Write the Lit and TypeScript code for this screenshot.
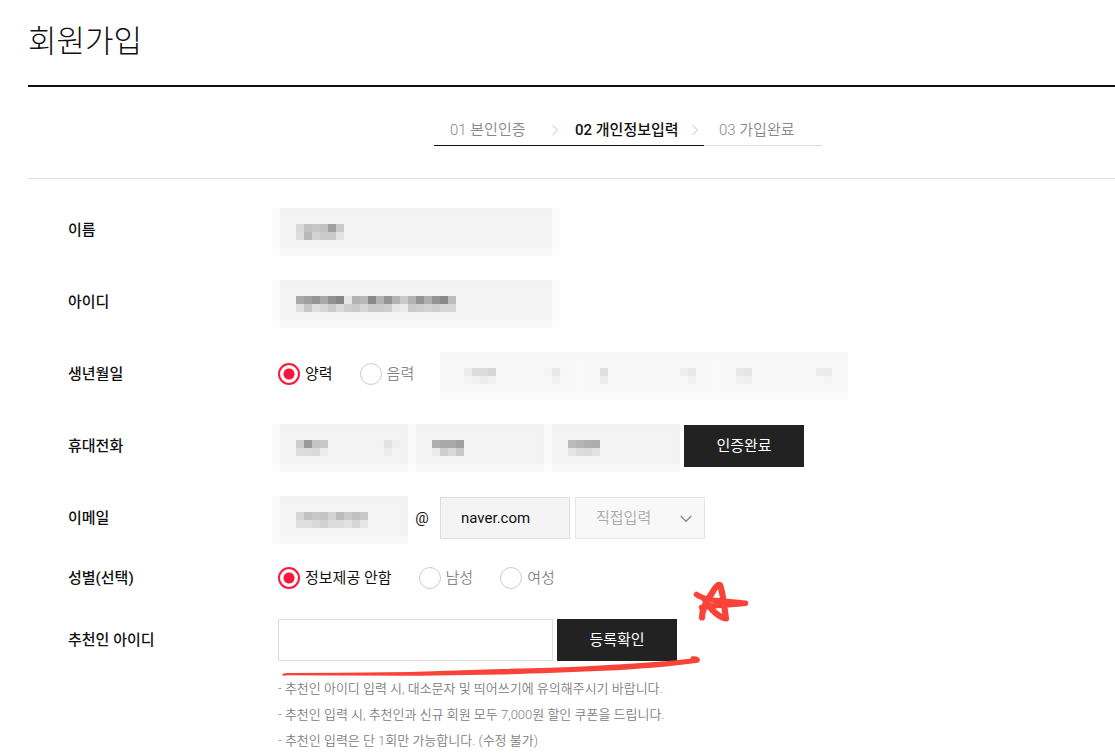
import { LitElement, html, svg, css } from "lit";
import { customElement, property } from "lit/decorators.js";

/** A run of mosaic blocks: column, row, then one grey level per block. */
type Run = [number, number, string];
/** A flat area behind the runs: column, row, columns, rows, colour. */
type Area = [number, number, number, number, string];

/** Privacy mosaic drawn over form fields on an 8px raster. */
@customElement("privacy-mosaic")
export class PrivacyMosaic extends LitElement {
  @property({ type: Number }) cols = 36;
  @property({ attribute: false }) areas: Area[] = [];
  @property({ attribute: false }) runs: Run[] = [];

  static styles = css`
    :host {
      display: block;
      pointer-events: none;
    }
    .raster {
      display: block;
    }
  `;

  render() {
    return html`<svg class="raster" width=${this.cols * 8} height="48" viewBox="0 0 ${this.cols} 6"
      shape-rendering="crispEdges" aria-hidden="true">
      ${this.areas.map(([x, y, w, h, c]) => svg`<rect x=${x} y=${y} width=${w} height=${h} fill=${c} />`)}
      ${this.runs.map(([x, y, levels]) =>
        levels.split(" ").map((l, i) => svg`<rect x=${x + i} y=${y} width="1" height="1" fill=${`#${l}${l}${l}`} />`)
      )}
    </svg>`;
  }
}

const WIDE_AREAS: Area[] = [
  [0, 0, 36, 5, "#fbfbfb"],
  [0, 5, 36, 1, "#fdfdfd"],
  [1, 0, 34, 1, "#f2f2f2"],
  [1, 1, 34, 4, "#f4f4f4"],
  [1, 5, 34, 1, "#f8f8f8"],
];

const BIRTH_AREAS: Area[] = [
  [0, 0, 51, 1, "#f6f6f6"],
  [0, 1, 51, 4, "#f8f8f8"],
  [0, 5, 51, 1, "#fbfbfb"],
  [17, 1, 1, 4, "#f9f9f9"],
  [34, 1, 1, 4, "#f9f9f9"],
];

const PHONE_AREAS: Area[] = [
  [0, 0, 51, 5, "#fafafa"],
  [0, 5, 51, 1, "#fcfcfc"],
  ...[1, 18, 35].flatMap((x): Area[] => [
    [x, 0, 16, 5, "#f2f2f2"],
    [x, 1, 15, 4, "#f4f4f4"],
    [x, 5, 16, 1, "#f8f8f8"],
  ]),
];

const MAIL_AREAS: Area[] = [
  [0, 0, 1, 6, "#fafafa"],
  [1, 0, 16, 5, "#f2f2f2"],
  [1, 1, 15, 4, "#f5f5f5"],
  [1, 5, 16, 1, "#f8f8f8"],
];

@customElement("app-root")
export class AppRoot extends LitElement {
  static styles = css`
    :host {
      display: block;
      box-sizing: border-box;
      padding-left: 28px;
      background: #fff;
      color: #111;
      font-family: Roboto, "Noto Sans CJK KR", sans-serif;
      font-size: 15px;
      line-height: 20px;
      overflow: hidden;
    }
    * {
      box-sizing: border-box;
    }
    .title {
      margin: 0;
      padding: 22px 0 23px;
      border-bottom: 2px solid #111;
      font-size: 31px;
      font-weight: 300;
      line-height: 40px;
    }
    .progress {
      padding: 28px 0 32px 406px;
      border-bottom: 1px solid #ddd;
    }
    .steps {
      display: flex;
      margin: 0;
      padding: 0;
      list-style: none;
    }
    .step {
      display: flex;
      align-items: center;
      justify-content: space-between;
      height: 31px;
      white-space: nowrap;
      border-bottom: 1px solid #ddd;
      color: #888;
      font-weight: 350;
    }
    .step.first {
      width: 141px;
      padding: 0 16px;
      border-color: #111;
    }
    .step.current {
      width: 129px;
      padding-right: 5px;
      border-color: #111;
      color: #111;
      font-weight: 500;
    }
    .step.last {
      width: 118px;
      padding-left: 15px;
    }
    .form {
      position: relative;
      display: flex;
      flex-direction: column;
      gap: 30px;
      padding: 30px 0 0 40px;
    }
    .row {
      display: grid;
      grid-template-columns: 210px 1fr;
      align-items: center;
    }
    .row.top {
      align-items: start;
    }
    .name {
      font-weight: 500;
      line-height: 42px;
    }
    .slim .name {
      padding-bottom: 2px;
      line-height: 18px;
    }
    .controls {
      display: flex;
      align-items: center;
      height: 42px;
    }
    .slim .controls {
      height: 20px;
      padding-bottom: 2px;
    }
    .masked {
      position: relative;
      display: flex;
      gap: 5px;
    }
    .mask {
      position: absolute;
      top: -1px;
      left: -6px;
    }
    .birth {
      width: 400px;
      margin-left: 26px;
    }
    .birth .mask {
      left: 0;
    }
    .phone {
      width: 402px;
      margin-right: 4px;
    }
    .field {
      flex: none;
      width: 130px;
      height: 42px;
      padding: 0 20px;
      border: 1px solid #ddd;
      border-radius: 0;
      outline: none;
      background: #f4f4f4;
      color: #111;
      font: inherit;
      font-weight: 400;
      appearance: none;
    }
    .field.wide {
      width: 275px;
    }
    .field.open {
      background: #fff;
    }
    .masked .field {
      border-color: transparent;
      opacity: 0;
    }
    .phone .field,
    .birth .field {
      flex: 1;
      width: 0;
    }
    .at {
      width: 32px;
      padding-right: 4px;
      text-align: center;
    }
    .picker {
      position: relative;
      margin-left: 5px;
    }
    .picker .field {
      display: block;
      border-color: #e5e5e5;
      background: #f8f8f8;
      color: #aaa;
      opacity: 1;
      font-weight: 350;
    }
    .chevron {
      position: absolute;
      top: 18px;
      right: 13px;
      pointer-events: none;
    }
    .button {
      width: 120px;
      height: 42px;
      padding: 0;
      border: 0;
      background: #222;
      color: #fff;
      font: inherit;
      cursor: pointer;
    }
    .radios {
      display: flex;
      gap: 27px;
    }
    .radio {
      display: flex;
      align-items: center;
      gap: 5px;
      white-space: nowrap;
      color: #888;
      font-weight: 350;
    }
    .radio.on {
      color: #111;
      font-weight: 400;
    }
    .dot {
      width: 22px;
      height: 22px;
      margin: 0;
      border: 1px solid #ccc;
      border-radius: 50%;
      background: #fff;
      appearance: none;
    }
    .dot:checked {
      border: 2px solid #ff143c;
      background: radial-gradient(circle, #ff143c 5px, #fff 6px);
    }
    .referral {
      gap: 4px;
    }
    .notes {
      margin: 0;
      padding: 15px 0 0;
      list-style: none;
      color: #808080;
      font-size: 13px;
      font-weight: 350;
      line-height: 26px;
    }
    .pen {
      position: absolute;
      top: 399px;
      left: 252px;
      pointer-events: none;
    }
  `;

  private arrow() {
    return html`<svg width="8" height="12" viewBox="0 0 8 12" aria-hidden="true">
      <path d="M1.5 1 6.5 6 1.5 11" fill="none" stroke="#ddd" stroke-width="1.3" />
    </svg>`;
  }

  private radio(group: string, label: string, on = false) {
    return html`<label class="radio ${on ? "on" : ""}">
      <input class="dot" type="radio" name=${group} .checked=${on} />${label}
    </label>`;
  }

  render() {
    return html`
      <h1 class="title">회원가입</h1>
      <nav class="progress">
        <ol class="steps">
          <li class="step first"><span>01 본인인증</span>${this.arrow()}</li>
          <li class="step current" aria-current="step"><span>02 개인정보입력</span>${this.arrow()}</li>
          <li class="step last"><span>03 가입완료</span></li>
        </ol>
      </nav>
      <form class="form">
        <div class="row">
          <label class="name" for="name">이름</label>
          <div class="controls">
            <div class="masked">
              <input class="field wide" id="name" disabled />
              <privacy-mosaic class="mask" .cols=${36} .areas=${WIDE_AREAS}
                .runs=${[[3, 2, "d8 c2 c7 c2 9f ca"], [3, 3, "dd b7 d2 ca ca e3"]]}></privacy-mosaic>
            </div>
          </div>
        </div>
        <div class="row">
          <label class="name" for="userid">아이디</label>
          <div class="controls">
            <div class="masked">
              <input class="field wide" id="userid" disabled />
              <privacy-mosaic class="mask" .cols=${36} .areas=${WIDE_AREAS}
                .runs=${[
                  [3, 2, "a8 a0 95 a8 90 86 e6 b3 b8 89 b3 94 b3 ca b3 94 ae 94 89 bc"],
                  [3, 3, "de c7 de d6 ca da ce ca d6 ca ca ce e6 ea ca ce d2 ce d6 d6"],
                ]}></privacy-mosaic>
            </div>
          </div>
        </div>
        <div class="row">
          <span class="name" id="birth">생년월일</span>
          <div class="controls">
            <div class="radios" role="radiogroup" aria-labelledby="birth">
              ${this.radio("calendar", "양력", true)} ${this.radio("calendar", "음력")}
            </div>
            <div class="masked birth">
              <select class="field" aria-label="년" disabled></select>
              <select class="field" aria-label="월" disabled></select>
              <select class="field" aria-label="일" disabled></select>
              <privacy-mosaic class="mask" .cols=${51} .areas=${BIRTH_AREAS}
                .runs=${[
                  [3, 2, "ec dc dc d6"], [3, 3, "f3 f0 ec f0"],
                  [13, 2, "f3 e7 f6"], [14, 3, "f0"],
                  [20, 2, "df"], [20, 3, "ec"],
                  [30, 2, "ee e7"], [31, 3, "f1"],
                  [37, 2, "e7 e4"], [37, 3, "f0 ef"],
                  [47, 2, "ec ea"], [48, 3, "f3"],
                ]}></privacy-mosaic>
            </div>
          </div>
        </div>
        <div class="row">
          <span class="name" id="phone">휴대전화</span>
          <div class="controls" role="group" aria-labelledby="phone">
            <div class="masked phone">
              <select class="field" aria-label="통신사 번호" disabled></select>
              <input class="field" aria-label="가운데 번호" disabled />
              <input class="field" aria-label="끝 번호" disabled />
              <privacy-mosaic class="mask" .cols=${51} .areas=${PHONE_AREAS}
                .runs=${[
                  [3, 2, "cc 99 c3 c8"], [3, 3, "dd dc d9 ec"],
                  [13, 2, "f2 e2 ee"], [14, 3, "ec"],
                  [20, 2, "ae a8 a8 a0"], [20, 3, "ea ce d8 c8"],
                  [37, 2, "bb b5 ae ad"], [37, 3, "e5 dc da e2"],
                ]}></privacy-mosaic>
            </div>
            <button class="button" type="button">인증완료</button>
          </div>
        </div>
        <div class="row">
          <label class="name" for="mail">이메일</label>
          <div class="controls">
            <div class="masked">
              <input class="field" id="mail" disabled />
              <privacy-mosaic class="mask" .cols=${17} .areas=${MAIL_AREAS}
                .runs=${[[3, 2, "d6 c1 c8 c4 d3 bb c9 c0 c8"], [3, 3, "de de d8 d1 dc dc e1 d6 e6"]]}></privacy-mosaic>
            </div>
            <span class="at">@</span>
            <input class="field" aria-label="이메일 도메인" .value=${"naver.com"} />
            <div class="picker">
              <select class="field" aria-label="도메인 선택" disabled>
                <option>직접입력</option>
              </select>
              <svg class="chevron" width="12" height="8" viewBox="0 0 12 8" aria-hidden="true">
                <path d="M.7 1 6 6.3 11.3 1" fill="none" stroke="#888" stroke-width="1.3" />
              </svg>
            </div>
          </div>
        </div>
        <div class="row slim">
          <span class="name" id="gender">성별(선택)</span>
          <div class="controls">
            <div class="radios" role="radiogroup" aria-labelledby="gender">
              ${this.radio("gender", "정보제공 안함", true)} ${this.radio("gender", "남성")}
              ${this.radio("gender", "여성")}
            </div>
          </div>
        </div>
        <div class="row top">
          <label class="name" for="referrer">추천인 아이디</label>
          <div>
            <div class="controls referral">
              <input class="field wide open" id="referrer" />
              <button class="button" type="button">등록확인</button>
            </div>
            <ul class="notes">
              <li>- 추천인 아이디 입력 시, 대소문자 및 띄어쓰기에 유의해주시기 바랍니다.</li>
              <li>- 추천인 입력 시, 추천인과 신규 회원 모두 7,000원 할인 쿠폰을 드립니다.</li>
              <li>- 추천인 입력은 단 1회만 가능합니다. (수정 불가)</li>
            </ul>
          </div>
        </div>
        <svg class="pen" width="480" height="108" viewBox="280 578 480 108" fill="none" stroke="#f94338"
          stroke-linecap="round" stroke-linejoin="round" aria-hidden="true">
          <path fill="#f94338" stroke="none"
            d="M282 675C283 673 286 673 290 673L340 672.700L410 672L470 670L520 668.500C580 667 640 664 690 658.700L691 657.700Q690 656 694 656.300C701 656.500 702 662 696 663C640 671 560 672.500 500 674.500L420 675.800L330 675.500L286 675.200Q283 676.500 282 675Z" />
          <path stroke-width="5.500"
            d="M696.500 594.500C700 597 706 599 712 600C724 601.500 735 602 745.500 603.300C732 605 716 604.500 701.500 607.500" />
          <path stroke-width="6.200" d="M702 617.500C702 609 706 602 712 593Q717 583.500 720 585C723 592 724 606 726 618.500C718 617 711 610 705 600" />
        </svg>
      </form>
    `;
  }
}
